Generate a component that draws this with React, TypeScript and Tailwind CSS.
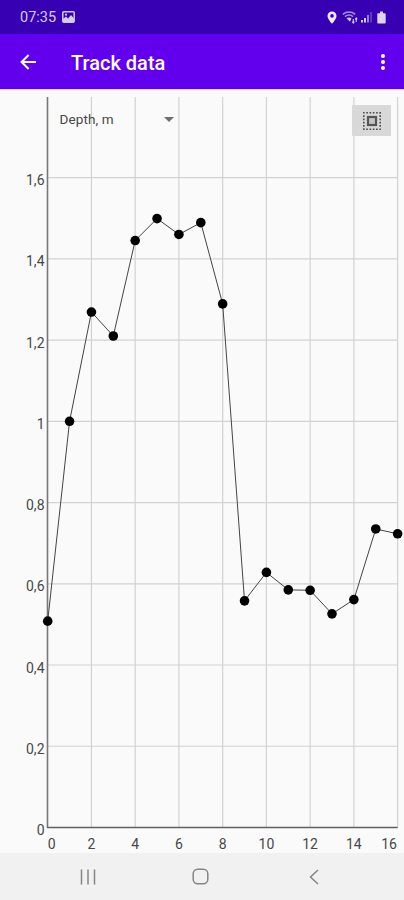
const CHART_WIDTH = 404;
const CHART_HEIGHT = 764;
const ORIGIN_X = 47.7;
const ORIGIN_Y = 738.5;
const STEP_X = 21.87;
const STEP_Y = 406.2;

const depths = [
  0.508, 1, 1.269, 1.21, 1.445, 1.499, 1.46, 1.489, 1.289, 0.558, 0.628, 0.585,
  0.584, 0.526, 0.561, 0.735, 0.723,
];

const xTicks = [0, 2, 4, 6, 8, 10, 12, 14, 16];
const yTicks = [0, 0.2, 0.4, 0.6, 0.8, 1, 1.2, 1.4, 1.6];

const toX = (value: number) => ORIGIN_X + value * STEP_X;
const toY = (value: number) => ORIGIN_Y - value * STEP_Y;

// the first and last labels are pushed inwards so they stay in the plot
const labelX = (tick: number) => {
  if (tick === 0) return toX(0) + 4;
  if (tick === 16) return toX(16) - 8.5;
  return toX(tick);
};

const StatusBar = () => (
  <div className="flex h-[34px] items-center justify-between bg-[#3700b3] pr-[18px] pl-5 text-[#d5caf2]">
    <div className="flex items-center gap-[5px]">
      <span className="w-[37px] pt-0.5 text-[14.5px] leading-none">07:35</span>
      <svg width="13" height="12" viewBox="0 0 13 12">
        <rect x="0.8" y="0.8" width="11.4" height="10.4" rx="1" fill="none" stroke="currentColor" strokeWidth="1.5" />
        <path d="M1 10V8l3-2.5 2 2L9 4l3 3.5V11H1z" fill="currentColor" />
        <circle cx="4" cy="3.7" r="1.1" fill="currentColor" />
      </svg>
    </div>
    <div className="flex items-center">
      <svg width="10" height="13" viewBox="0 0 10 13" className="mr-[5px]">
        <path
          d="M5 .5A4.5 4.5 0 0 0 .5 5C.5 8.2 5 12.8 5 12.8S9.5 8.2 9.5 5A4.5 4.5 0 0 0 5 .5zM5 6.7a1.8 1.8 0 1 1 0-3.6 1.8 1.8 0 0 1 0 3.6z"
          fill="#eee9fb"
        />
      </svg>
      <svg width="16" height="13" viewBox="0 0 16 13" className="mr-[3px]" fill="none" stroke="currentColor">
        <path d="M.8 3.3C4.5.4 9.5.4 13.2 3.3M2.9 5.6c2.5-1.9 5.7-1.9 8.2 0" strokeWidth="1.6" opacity=".7" />
        <path d="M4.5 7.3c1.6-1.1 3.5-1.1 5 0L8 10.8z" fill="currentColor" stroke="none" />
        <path d="M11.3 8v4M14.2 7v4M10.3 10.6l1 1.4 1-1.4M13.2 8.4l1-1.4 1 1.4" strokeWidth="1.1" />
      </svg>
      <svg width="12" height="12" viewBox="0 0 12 12" className="mr-1" fill="currentColor">
        <rect x="0" y="9" width="2" height="2.5" />
        <rect x="3" y="7" width="2" height="4.5" />
        <rect x="6" y="4" width="2" height="7.5" opacity=".6" />
        <rect x="9.2" y="1" width="1.8" height="10.5" opacity=".3" />
      </svg>
      <svg width="9" height="13" viewBox="0 0 9 13" fill="#ddd4f5">
        <path d="M3 .5h3v1.7h2q.7 0 .7.7v8.9q0 .7-.7.7H1q-.7 0-.7-.7V2.9q0-.7.7-.7h2z" />
      </svg>
    </div>
  </div>
);

const AppBar = () => (
  <header className="flex h-[55px] items-center bg-[#6200ee] pr-4 pl-5 text-white">
    <button aria-label="Back">
      <svg width="16" height="16" viewBox="0 0 16 16" fill="none" stroke="currentColor" strokeWidth="2">
        <path d="M16 8H1.8M8.6 1L1.6 8l7 7" />
      </svg>
    </button>
    <h1 className="ml-[35px] flex-1 pt-0.5 text-[20px] leading-none font-medium">Track data</h1>
    <button aria-label="More options" className="flex w-[10px] flex-col items-center gap-[1.6px] pt-px">
      <span className="h-[4.2px] w-[4.2px] rounded-full bg-white" />
      <span className="h-[4.2px] w-[4.2px] rounded-full bg-white" />
      <span className="h-[4.2px] w-[4.2px] rounded-full bg-white" />
    </button>
  </header>
);

const DepthChart = () => (
  <svg
    width={CHART_WIDTH}
    height={CHART_HEIGHT}
    viewBox={`0 0 ${CHART_WIDTH} ${CHART_HEIGHT}`}
    className="block"
  >
    {xTicks.slice(1).map((tick) => (
      <line key={tick} x1={toX(tick)} x2={toX(tick)} y1="8" y2={ORIGIN_Y} stroke="#d2d2d2" strokeWidth="1.2" />
    ))}
    {yTicks.slice(1).map((tick) => (
      <line key={tick} x1={ORIGIN_X} x2={toX(16)} y1={toY(tick)} y2={toY(tick)} stroke="#d2d2d2" strokeWidth="1.2" />
    ))}
    <line x1="47.5" x2="47.5" y1="8" y2={ORIGIN_Y + 0.5} stroke="#777" strokeWidth="1.6" />
    <line x1="47" x2={toX(16)} y1={ORIGIN_Y} y2={ORIGIN_Y} stroke="#606060" strokeWidth="1.5" />

    <g fontSize="14" fill="#484848">
      {yTicks.map((tick) => (
        <text key={tick} x="44.7" y={toY(tick) + 7.6} textAnchor="end" letterSpacing="0.1">
          {String(tick).replace(".", ",")}
        </text>
      ))}
      {xTicks.map((tick) => (
        <text key={tick} x={labelX(tick)} y="760" textAnchor="middle">
          {tick}
        </text>
      ))}
    </g>

    <polyline
      points={depths.map((depth, i) => `${toX(i)},${toY(depth)}`).join(" ")}
      fill="none"
      stroke="#444"
      strokeWidth="1"
    />
    {depths.map((depth, i) => (
      <circle key={i} cx={toX(i)} cy={toY(depth)} r="4.8" fill="#000" />
    ))}
  </svg>
);

const SelectAllIcon = () => (
  <svg width="20" height="20" viewBox="0 0 20 20" fill="none">
    <rect x="1.8" y="1.8" width="16.4" height="16.4" stroke="#4a4a4a" strokeWidth="1.5" strokeDasharray="1.64 1.64" strokeDashoffset="0.8" />
    <rect x="6" y="6" width="8" height="8" fill="#c4c4c4" stroke="#555" strokeWidth="2.2" />
  </svg>
);

const NavigationBar = () => (
  <nav className="flex h-[47px] items-center bg-[#f1f1f1] text-[#858585]">
    <button aria-label="Recents" className="ml-20">
      <svg width="16" height="16" viewBox="0 0 16 16" stroke="currentColor" strokeWidth="1.5">
        <path d="M1.5 .5v15M8 .5v15M14.5 .5v15" />
      </svg>
    </button>
    <button aria-label="Home" className="ml-24">
      <svg width="17" height="17" viewBox="0 0 17 17" fill="none" stroke="currentColor" strokeWidth="1.5">
        <rect x="1.2" y="1.2" width="14.6" height="14.6" rx="4.5" />
      </svg>
    </button>
    <button aria-label="Back" className="ml-[99px]">
      <svg width="12" height="16" viewBox="0 0 12 16" fill="none" stroke="currentColor" strokeWidth="1.5">
        <path d="M10 1L2.5 8l7.5 7" />
      </svg>
    </button>
  </nav>
);

export default function App() {
  return (
    <div className="flex h-[900px] w-[404px] flex-col overflow-hidden bg-[#fafafa] font-[Roboto,sans-serif]">
      <StatusBar />
      <AppBar />
      <main className="relative h-[764px] border-t border-[#ded2f6]">
        <div className="-mt-px">
          <DepthChart />
        </div>
        <button className="absolute top-[19px] left-[59.5px] flex w-[114px] items-center justify-between text-[13.5px] leading-5 text-[#484848]">
          <span className="pb-px tracking-[0.1px]">Depth, m</span>
          <svg width="10" height="5" viewBox="0 0 10 5" fill="#707070">
            <path d="M0 0h10L5 5z" />
          </svg>
        </button>
        <button
          aria-label="Select all"
          className="absolute top-[15px] left-[352px] flex h-[31px] w-[39px] items-center justify-center rounded-[1px] bg-[#d7d8d7]"
        >
          <SelectAllIcon />
        </button>
      </main>
      <NavigationBar />
    </div>
  );
}
